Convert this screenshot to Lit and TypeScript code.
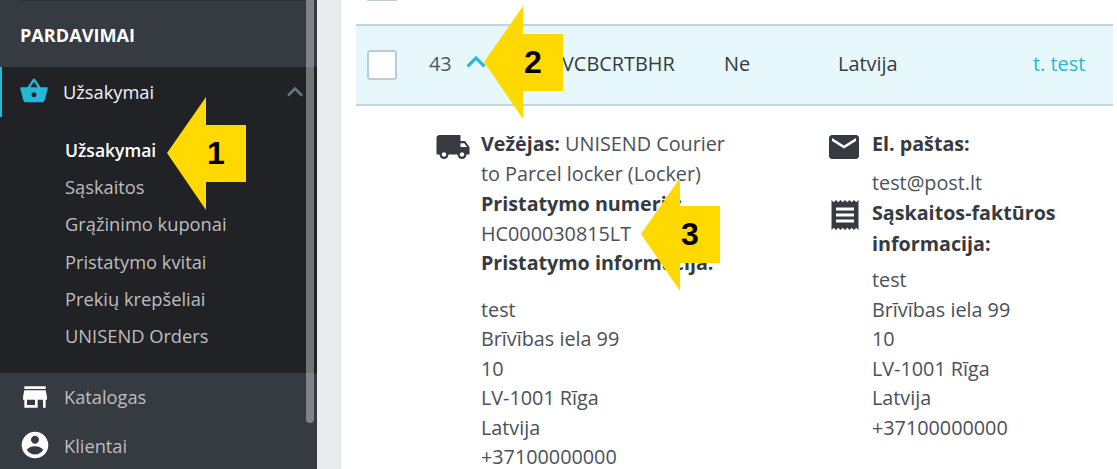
import { LitElement, html, css, svg } from "lit";
import { customElement } from "lit/decorators.js";

const P = {
  basket: "M17.21 9l-4.38-6.56c-.19-.28-.51-.42-.83-.42-.32 0-.64.14-.83.43L6.79 9H2c-.55 0-1 .45-1 1 0 .09.01.18.04.27l2.54 9.27c.23.84 1 1.46 1.92 1.46h13c.92 0 1.69-.62 1.93-1.46l2.54-9.27L23 10c0-.55-.45-1-1-1h-4.79zM9 9l3-4.4L15 9H9zm3 8c-1.1 0-2-.9-2-2s.9-2 2-2 2 .9 2 2-.9 2-2 2z",
  store: "M20 4H4v2h16V4zm1 10v-2l-1-5H4l-1 5v2h1v6h10v-6h4v6h2v-6h1zm-9 4H6v-4h6v4z",
  account: "M12 2C6.48 2 2 6.48 2 12s4.48 10 10 10 10-4.48 10-10S17.52 2 12 2zm0 3c1.66 0 3 1.34 3 3s-1.34 3-3 3-3-1.34-3-3 1.34-3 3-3zm0 14.2c-2.5 0-4.71-1.28-6-3.22.03-1.99 4-3.08 6-3.08 1.99 0 5.97 1.09 6 3.08-1.29 1.94-3.5 3.22-6 3.22z",
  truck: "M20 8h-3V4H3c-1.1 0-2 .9-2 2v11h2c0 1.66 1.34 3 3 3s3-1.34 3-3h6c0 1.66 1.34 3 3 3s3-1.34 3-3h2v-5l-3-4zM6 18.5c-.83 0-1.5-.67-1.5-1.5s.67-1.5 1.5-1.5 1.5.67 1.5 1.5-.67 1.5-1.5 1.5zm13.5-9l1.96 2.5H17V9.5h2.5zm-1.5 9c-.83 0-1.5-.67-1.5-1.5s.67-1.5 1.5-1.5 1.5.67 1.5 1.5-.67 1.5-1.5 1.5z",
  mail: "M20 4H4c-1.1 0-1.99.9-1.99 2L2 18c0 1.1.9 2 2 2h16c1.1 0 2-.9 2-2V6c0-1.1-.9-2-2-2zm0 4l-8 5-8-5V6l8 5 8-5v2z",
  receipt: "M18 17H6v-2h12v2zm0-4H6v-2h12v2zm0-4H6V7h12v2zM3 22l1.5-1.5L6 22l1.5-1.5L9 22l1.5-1.5L12 22l1.5-1.5L15 22l1.5-1.5L18 22l1.5-1.5L21 22V2l-1.5 1.5L18 2l-1.5 1.5L15 2l-1.5 1.5L12 2l-1.5 1.5L9 2 7.5 3.5 6 2 4.5 3.5 3 2v20z",
  up: "M12 8l-6 6 1.41 1.41L12 10.83l4.59 4.58L18 14z",
};

const icon = (d: string, cls: string) =>
  html`<svg class=${cls} viewBox="0 0 24 24" aria-hidden="true">${svg`<path d=${d}></path>`}</svg>`;

const ARROW = "0,56 39,0 39,28 79,28 79,85 39,85 39,113";

@customElement("app-root")
export class AppRoot extends LitElement {
  static styles = css`
    :host { display: block; width: 1117px; height: 469px; overflow: hidden; position: relative;
      font-family: "Open Sans", "Noto Sans", sans-serif; background: #fff; }
    * { box-sizing: border-box; }
    .page { display: flex; height: 469px; }

    .side { width: 317px; flex: none; background: #363a41; color: #bebebe; font-size: 18.25px; }
    .head { height: 67px; padding: 2px 0 0 20px; display: flex; align-items: center; position: relative;
      color: #fff; font-weight: 700; font-size: 18.1px; }
    .head::before { content: ""; position: absolute; left: 20px; right: 11px; top: 0; height: 1px; background: #2c2f35; }
    .open { height: 306px; background: #202226; }
    .top { height: 50px; display: flex; align-items: center; border-left: 2px solid #25b9d7; color: #f4f4f4; position: relative; }
    .basket { width: 30px; height: 30px; fill: #25b9d7; margin-left: 17px; margin-right: 14px; margin-top: -2px; flex: none; }
    .top span { margin-top: -1px; }
    .chev { position: absolute; left: 277px; top: 9px; width: 32px; height: 32px; fill: #5f7a80; }
    .subs { padding-top: 14px; display: flex; flex-direction: column; }
    .sub { height: 37.2px; padding-left: 65px; display: flex; align-items: center; font-size: 18.3px; }
    .sub.on { color: #fff; font-weight: 600; font-size: 17.5px; }
    .item { display: flex; align-items: center; height: 49px; color: #bebebe; padding-bottom: 2px; }
    .item svg { width: 32px; height: 32px; fill: #fff; margin-left: 19px; margin-right: 13px; flex: none; }
    .item.k { height: 48px; }
    .bar { position: absolute; left: 306px; top: 0; width: 8px; height: 423px; border-radius: 0 0 4px 4px; background: rgba(255,255,255,.37); }

    .gutter { width: 24px; flex: none; background: #eaebec; border-right: 1px solid #dbe6e9; }
    .main { flex: 1; min-width: 0; padding: 0 4px 0 15px; color: #363a41; font-size: 19.9px; }
    .stub { height: 24px; padding-left: 11px; }
    .stub div { width: 30px; height: 1px; background: #bbcdd2; }
    .row { height: 82px; background: #e7f8fc; border-top: 2px solid #c5d6db; border-bottom: 2px solid #c5d6db;
      display: flex; align-items: center; padding-left: 11px; }
    .check { width: 30px; height: 30px; background: #fff; border: 2px solid #bbcdd2; border-radius: 3px; flex: none; }
    .id { margin-left: 32px; width: 37px; flex: none; color: #4f5960; margin-top: -4px; }
    .tog { width: 96px; flex: none; display: flex; margin-top: -2px; }
    .tog svg { width: 38px; height: 38px; fill: #25b9d7; margin: -4px 0 0 -9.5px; flex: none; }
    .ref { width: 162px; flex: none; margin-top: -4px; }
    .ne { width: 114px; flex: none; margin-top: -4px; }
    .country { width: 195px; flex: none; margin-top: -4px; }
    .link { color: #25b9d7; margin-top: -4px; }

    .details { display: grid; grid-template-columns: 391px 1fr; padding: 23px 0 0 125px; line-height: 29.5px; }
    .col { position: relative; }
    b { font-weight: 700; color: #363a41; font-size: 19.7px; }
    .col div { color: #4a5158; font-size: 19.8px; }
    .col .first { margin-bottom: 1px; }
    .gap { margin-top: 17px; }
    .ic { position: absolute; fill: #363a41; width: 36px; height: 36px; }
    .ic.truck { left: -46.5px; top: 0; }
    .ic.mail { left: -46px; top: 0; }
    .ic.rec { left: -45.5px; top: 68px; }
    .c2 .mt { margin-top: 9px; }
    .c2 .lh { line-height: 31px; }
    .c2 .gp2 { margin-top: 6px; }

    .arrow { position: absolute; width: 79px; height: 113px; }
    .arrow polygon { fill: #ffd900; }
    .arrow .n { position: absolute; left: 33px; top: 28px; width: 32px; height: 57px; display: flex; align-items: center; justify-content: center;
      font: 700 32px "Liberation Sans", Arial, sans-serif; color: #000; }
    .arrow svg { position: absolute; inset: 0; width: 79px; height: 113px; }
    .a1 { left: 167px; top: 97px; }
    .a2 { left: 484px; top: 6px; }
    .a3 { left: 641px; top: 178px; }
  `;

  private arrow(n: string, cls: string) {
    return html`<div class="arrow ${cls}">
      <svg viewBox="0 0 79 113" aria-hidden="true">${svg`<polygon points=${ARROW}></polygon>`}</svg>
      <span class="n">${n}</span>
    </div>`;
  }

  render() {
    return html`
      <div class="page">
        <aside class="side">
          <div class="head">PARDAVIMAI</div>
          <div class="open">
            <div class="top">${icon(P.basket, "basket")}<span>Užsakymai</span>${icon(P.up, "chev")}</div>
            <div class="subs">
              <div class="sub on">Užsakymai</div>
              <div class="sub">Sąskaitos</div>
              <div class="sub">Grąžinimo kuponai</div>
              <div class="sub">Pristatymo kvitai</div>
              <div class="sub">Prekių krepšeliai</div>
              <div class="sub">UNISEND Orders</div>
            </div>
          </div>
          <div class="item">${icon(P.store, "")}Katalogas</div>
          <div class="item k">${icon(P.account, "")}Klientai</div>
        </aside>
        <div class="gutter"></div>
        <main class="main">
          <div class="stub"><div></div></div>
          <div class="row">
            <div class="check"></div>
            <div class="id">43</div>
            <div class="tog">${icon(P.up, "")}</div>
            <div class="ref">VCBCRTBHR</div>
            <div class="ne">Ne</div>
            <div class="country">Latvija</div>
            <div class="link">t. test</div>
          </div>
          <div class="details">
            <div class="col">
              ${icon(P.truck, "ic truck")}
              <div class="first"><b>Vežėjas:</b> UNISEND Courier<br />to Parcel locker (Locker)</div>
              <div><b>Pristatymo numeris:</b></div>
              <div>HC000030815LT</div>
              <div><b>Pristatymo informacija:</b></div>
              <div class="gap">test<br />Brīvības iela 99<br />10<br />LV-1001 Rīga<br />Latvija<br />+37100000000</div>
            </div>
            <div class="col c2">
              ${icon(P.mail, "ic mail")}
              ${icon(P.receipt, "ic rec")}
              <div><b>El. paštas:</b></div>
              <div class="mt">test@post.lt</div>
              <div class="lh"><b>Sąskaitos-faktūros<br />informacija:</b></div>
              <div class="gp2">test<br />Brīvības iela 99<br />10<br />LV-1001 Rīga<br />Latvija<br />+37100000000</div>
            </div>
          </div>
        </main>
      </div>
      <div class="bar"></div>
      ${this.arrow("1", "a1")}
      ${this.arrow("2", "a2")}
      ${this.arrow("3", "a3")}
    `;
  }
}
